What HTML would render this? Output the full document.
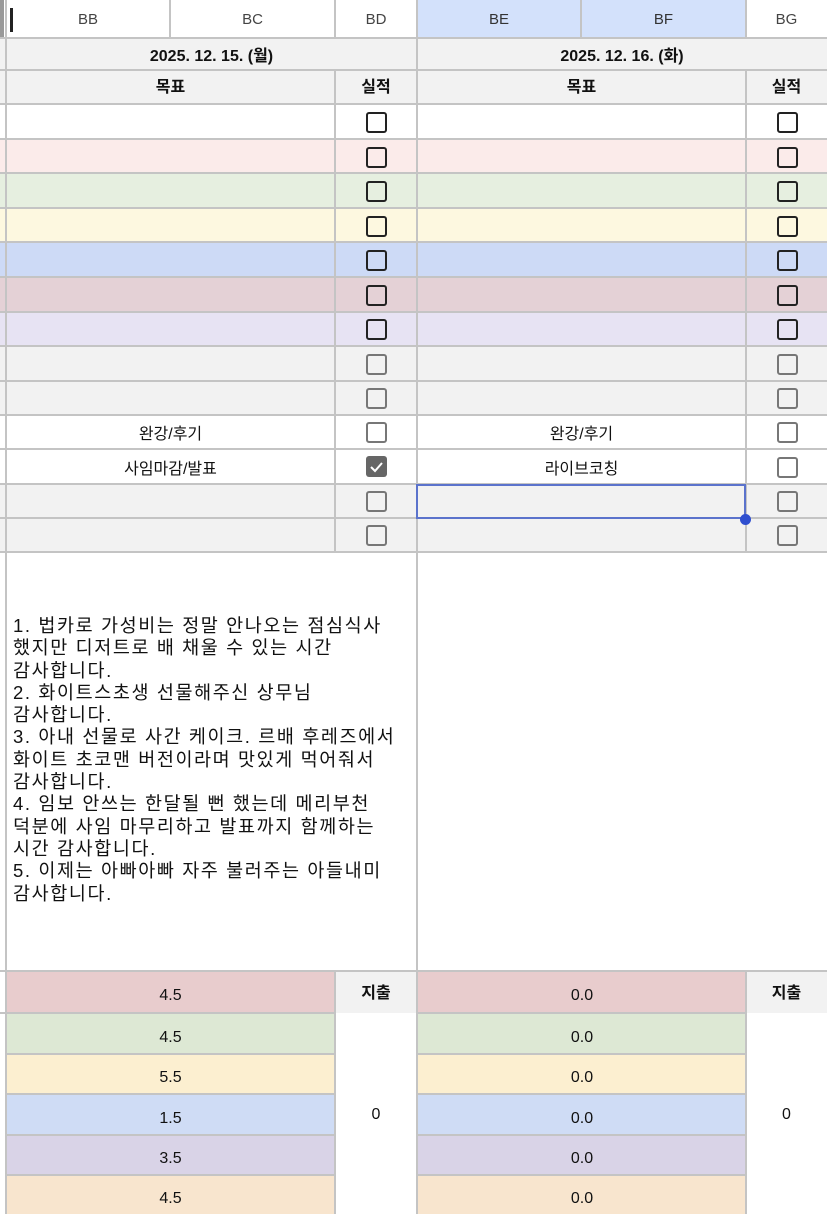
<!DOCTYPE html><html><head><meta charset="utf-8"><style>
body{margin:0;width:827px;height:1214px;overflow:hidden;background:#fff;position:relative;font-family:"Liberation Sans","Noto Sans CJK KR",sans-serif;color:#111}
.a{position:absolute;box-sizing:border-box}
.t{display:flex;align-items:center;justify-content:center;font-size:16px}
.hl{background:#c4c4c4}
.cb{position:absolute;width:21px;height:21px;border:2.5px solid #222;border-radius:3px;box-sizing:border-box;background:transparent}
.cb.l{border-color:#777;border-width:2px}
.n{padding-top:7px}
</style></head><body>
<div class="a t" style="left:0;top:0;width:827px;height:38px;background:#fff;font-size:15px;color:#444"></div>
<div class="a" style="left:417px;top:0;width:329px;height:38px;background:#d3e1fb"></div>
<div class="a t" style="left:6px;top:0;width:164px;height:38px;font-size:15px;color:#444">BB</div>
<div class="a t" style="left:170px;top:0;width:165px;height:38px;font-size:15px;color:#444">BC</div>
<div class="a t" style="left:335px;top:0;width:82px;height:38px;font-size:15px;color:#444">BD</div>
<div class="a t" style="left:417px;top:0;width:164px;height:38px;font-size:15px;color:#333">BE</div>
<div class="a t" style="left:581px;top:0;width:165px;height:38px;font-size:15px;color:#333">BF</div>
<div class="a t" style="left:746px;top:0;width:81px;height:38px;font-size:15px;color:#444">BG</div>
<div class="a" style="left:0;top:0;width:4px;height:38px;background:#999"></div>
<div class="a" style="left:10px;top:8px;width:3px;height:24px;background:#222"></div>
<div class="a" style="left:0;top:38px;width:827px;height:66px;background:#f2f2f2"></div>
<div class="a t" style="left:6px;top:38px;width:411px;height:32px;font-weight:bold">2025. 12. 15. (월)</div>
<div class="a t" style="left:417px;top:38px;width:410px;height:32px;font-weight:bold">2025. 12. 16. (화)</div>
<div class="a t" style="left:6px;top:70px;width:329px;height:34px;font-weight:bold;padding-bottom:4px">목표</div>
<div class="a t" style="left:335px;top:70px;width:82px;height:34px;font-weight:bold;padding-bottom:4px">실적</div>
<div class="a t" style="left:417px;top:70px;width:329px;height:34px;font-weight:bold;padding-bottom:4px">목표</div>
<div class="a t" style="left:746px;top:70px;width:81px;height:34px;font-weight:bold;padding-bottom:4px">실적</div>
<div class="a" style="left:0;top:104px;width:827px;height:35px;background:#fff"></div>
<div class="a" style="left:0;top:139px;width:827px;height:34px;background:#fbebea"></div>
<div class="a" style="left:0;top:173px;width:827px;height:35px;background:#e6efe0"></div>
<div class="a" style="left:0;top:208px;width:827px;height:34px;background:#fdf8e0"></div>
<div class="a" style="left:0;top:242px;width:827px;height:35px;background:#cddaf6"></div>
<div class="a" style="left:0;top:277px;width:827px;height:35px;background:#e4d1d6"></div>
<div class="a" style="left:0;top:312px;width:827px;height:34px;background:#e7e3f3"></div>
<div class="a" style="left:0;top:346px;width:827px;height:69px;background:#f2f2f2"></div>
<div class="a" style="left:0;top:484px;width:827px;height:68px;background:#f2f2f2"></div>
<div class="a t" style="left:6px;top:415px;width:329px;height:34px">완강/후기</div>
<div class="a t" style="left:6px;top:449px;width:329px;height:35px">사임마감/발표</div>
<div class="a t" style="left:417px;top:415px;width:329px;height:34px">완강/후기</div>
<div class="a t" style="left:417px;top:449px;width:329px;height:35px">라이브코칭</div>
<div class="a hl" style="left:0;top:37px;width:827px;height:2px"></div>
<div class="a hl" style="left:0;top:69px;width:827px;height:2px"></div>
<div class="a hl" style="left:0;top:103px;width:827px;height:2px"></div>
<div class="a hl" style="left:0;top:138px;width:827px;height:2px"></div>
<div class="a hl" style="left:0;top:172px;width:827px;height:2px"></div>
<div class="a hl" style="left:0;top:207px;width:827px;height:2px"></div>
<div class="a hl" style="left:0;top:241px;width:827px;height:2px"></div>
<div class="a hl" style="left:0;top:276px;width:827px;height:2px"></div>
<div class="a hl" style="left:0;top:311px;width:827px;height:2px"></div>
<div class="a hl" style="left:0;top:345px;width:827px;height:2px"></div>
<div class="a hl" style="left:0;top:380px;width:827px;height:2px"></div>
<div class="a hl" style="left:0;top:414px;width:827px;height:2px"></div>
<div class="a hl" style="left:0;top:448px;width:827px;height:2px"></div>
<div class="a hl" style="left:0;top:483px;width:827px;height:2px"></div>
<div class="a hl" style="left:0;top:517px;width:827px;height:2px"></div>
<div class="a hl" style="left:0;top:551px;width:827px;height:2px"></div>
<div class="a hl" style="left:0;top:970px;width:827px;height:2px"></div>
<div class="a" style="left:13px;top:615px;width:404px;font-size:18.5px;letter-spacing:1.6px;line-height:22.3px;color:#111;white-space:nowrap">1. 법카로 가성비는 정말 안나오는 점심식사<br>했지만 디저트로 배 채울 수 있는 시간<br>감사합니다.<br>2. 화이트스초생 선물해주신 상무님<br>감사합니다.<br>3. 아내 선물로 사간 케이크. 르배 후레즈에서<br>화이트 초코맨 버전이라며 맛있게 먹어줘서<br>감사합니다.<br>4. 임보 안쓰는 한달될 뻔 했는데 메리부천<br>덕분에 사임 마무리하고 발표까지 함께하는<br>시간 감사합니다.<br>5. 이제는 아빠아빠 자주 불러주는 아들내미<br>감사합니다.</div>
<div class="a t n" style="left:6px;top:972px;width:329px;height:41px;background:#e8cccd">4.5</div>
<div class="a t n" style="left:6px;top:1014px;width:329px;height:40px;background:#dde8d4">4.5</div>
<div class="a t n" style="left:6px;top:1055px;width:329px;height:39px;background:#fcefd0">5.5</div>
<div class="a t n" style="left:6px;top:1095px;width:329px;height:40px;background:#cfdcf5">1.5</div>
<div class="a t n" style="left:6px;top:1136px;width:329px;height:39px;background:#d9d3e7">3.5</div>
<div class="a t n" style="left:6px;top:1176px;width:329px;height:38px;background:#f8e5ce">4.5</div>
<div class="a t n" style="left:418px;top:972px;width:328px;height:41px;background:#e8cccd">0.0</div>
<div class="a t n" style="left:418px;top:1014px;width:328px;height:40px;background:#dde8d4">0.0</div>
<div class="a t n" style="left:418px;top:1055px;width:328px;height:39px;background:#fcefd0">0.0</div>
<div class="a t n" style="left:418px;top:1095px;width:328px;height:40px;background:#cfdcf5">0.0</div>
<div class="a t n" style="left:418px;top:1136px;width:328px;height:39px;background:#d9d3e7">0.0</div>
<div class="a t n" style="left:418px;top:1176px;width:328px;height:38px;background:#f8e5ce">0.0</div>
<div class="a t" style="left:335px;top:972px;width:82px;height:41px;background:#f2f2f2;font-weight:bold;padding-bottom:4px">지출</div>
<div class="a t" style="left:746px;top:972px;width:81px;height:41px;background:#f2f2f2;font-weight:bold;padding-bottom:4px">지출</div>
<div class="a t" style="left:335px;top:1095px;width:82px;height:40px">0</div>
<div class="a t" style="left:746px;top:1095px;width:81px;height:40px">0</div>
<div class="a hl" style="left:0;top:1012px;width:335px;height:2px"></div>
<div class="a hl" style="left:417px;top:1012px;width:329px;height:2px"></div>
<div class="a hl" style="left:6px;top:1053px;width:329px;height:2px"></div>
<div class="a hl" style="left:417px;top:1053px;width:329px;height:2px"></div>
<div class="a hl" style="left:6px;top:1093px;width:329px;height:2px"></div>
<div class="a hl" style="left:417px;top:1093px;width:329px;height:2px"></div>
<div class="a hl" style="left:6px;top:1134px;width:329px;height:2px"></div>
<div class="a hl" style="left:417px;top:1134px;width:329px;height:2px"></div>
<div class="a hl" style="left:6px;top:1174px;width:329px;height:2px"></div>
<div class="a hl" style="left:417px;top:1174px;width:329px;height:2px"></div>
<div class="a hl" style="left:5px;top:0;width:2px;height:1214px"></div>
<div class="a hl" style="left:169px;top:0;width:2px;height:38px"></div>
<div class="a hl" style="left:334px;top:0;width:2px;height:38px"></div>
<div class="a hl" style="left:334px;top:70px;width:2px;height:482px"></div>
<div class="a hl" style="left:334px;top:971px;width:2px;height:243px"></div>
<div class="a hl" style="left:416px;top:0;width:2px;height:1214px"></div>
<div class="a hl" style="left:580px;top:0;width:2px;height:38px"></div>
<div class="a hl" style="left:745px;top:0;width:2px;height:38px"></div>
<div class="a hl" style="left:745px;top:70px;width:2px;height:482px"></div>
<div class="a hl" style="left:745px;top:971px;width:2px;height:243px"></div>
<div class="a" style="left:416px;top:484px;width:330px;height:35px;border:2px solid #5b73cc"></div>
<div class="a" style="left:740px;top:514px;width:11px;height:11px;border-radius:50%;background:#2f4fcf"></div>
<div class="cb" style="left:366px;top:112px"></div><div class="cb" style="left:777px;top:112px"></div>
<div class="cb" style="left:366px;top:147px"></div><div class="cb" style="left:777px;top:147px"></div>
<div class="cb" style="left:366px;top:181px"></div><div class="cb" style="left:777px;top:181px"></div>
<div class="cb" style="left:366px;top:216px"></div><div class="cb" style="left:777px;top:216px"></div>
<div class="cb" style="left:366px;top:250px"></div><div class="cb" style="left:777px;top:250px"></div>
<div class="cb" style="left:366px;top:285px"></div><div class="cb" style="left:777px;top:285px"></div>
<div class="cb" style="left:366px;top:319px"></div><div class="cb" style="left:777px;top:319px"></div>
<div class="cb l" style="left:366px;top:354px"></div><div class="cb l" style="left:777px;top:354px"></div>
<div class="cb l" style="left:366px;top:388px"></div><div class="cb l" style="left:777px;top:388px"></div>
<div class="cb l" style="left:366px;top:422px"></div><div class="cb l" style="left:777px;top:422px"></div>
<div class="a" style="left:366px;top:456px;width:21px;height:21px;border-radius:3px;background:#666"><svg width="21" height="21"><path d="M5 11 L9 15 L16 7" stroke="#fff" stroke-width="2" fill="none"/></svg></div>
<div class="cb l" style="left:777px;top:457px"></div>
<div class="cb l" style="left:366px;top:491px"></div><div class="cb l" style="left:777px;top:491px"></div>
<div class="cb l" style="left:366px;top:525px"></div><div class="cb l" style="left:777px;top:525px"></div>
</body></html>
